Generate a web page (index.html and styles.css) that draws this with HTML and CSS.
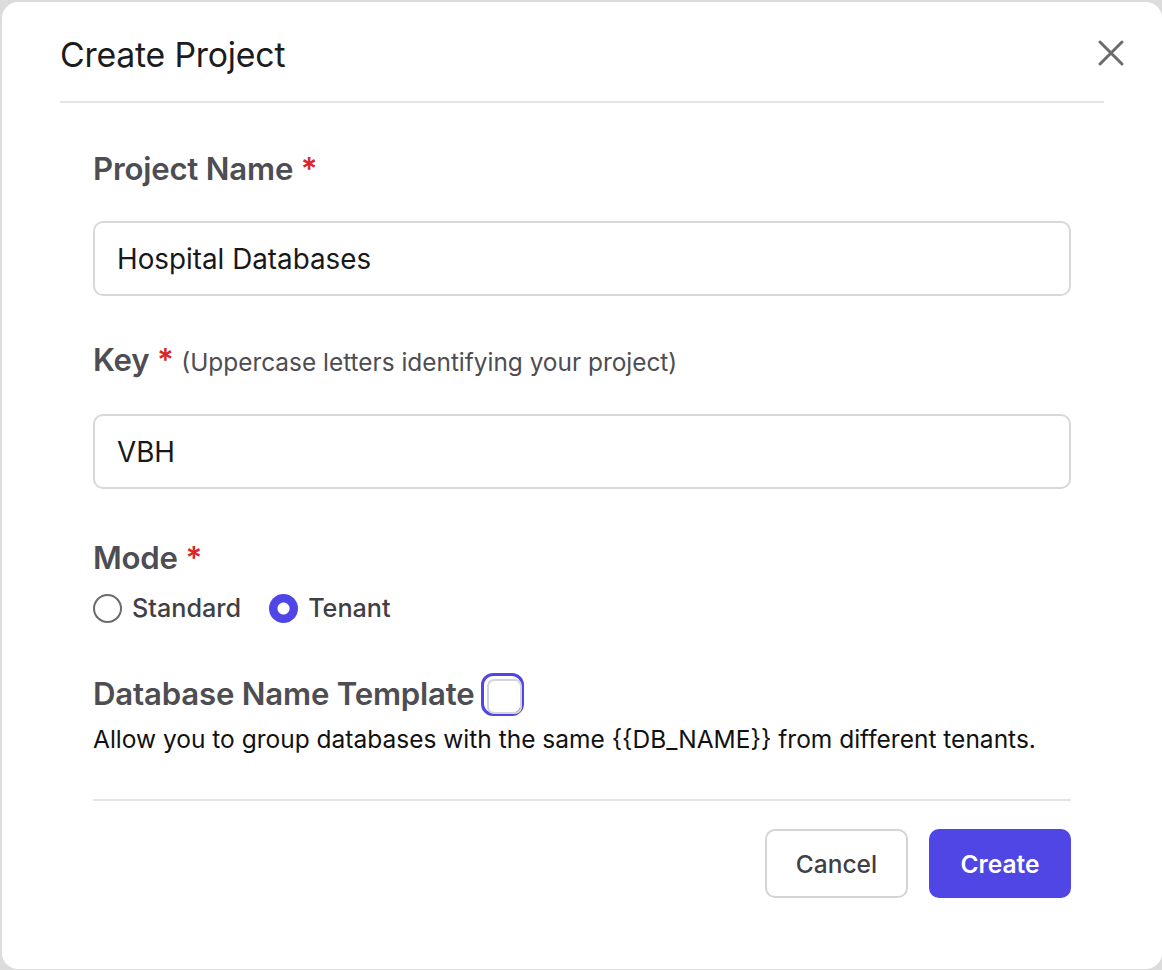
FILE: index.html
```html
<!DOCTYPE html>
<html lang="en">
<head>
<meta charset="utf-8">
<title>Create Project</title>
<link rel="stylesheet" href="styles.css">
</head>
<body>
<div class="dialog">
  <div class="header">
    <h1 class="title">Create Project</h1>
    <button class="close" aria-label="Close">
      <svg width="28" height="28" viewBox="0 0 28 28"><path d="M3 3 L25 25 M25 3 L3 25" stroke="#6b6b6b" stroke-width="3" stroke-linecap="round"/></svg>
    </button>
  </div>
  <div class="body">
    <div class="field">
      <div class="label">Project Name <span class="req">*</span></div>
      <div class="input">Hospital Databases</div>
    </div>
    <div class="field">
      <div class="label">Key <span class="req">*</span> <span class="hint">(Uppercase letters identifying your project)</span></div>
      <div class="input">VBH</div>
    </div>
    <div class="field mode">
      <div class="label">Mode <span class="req">*</span></div>
      <div class="radios">
        <label class="radio"><span class="dot"></span>Standard</label>
        <label class="radio"><span class="dot on"></span>Tenant</label>
      </div>
    </div>
    <div class="field template">
      <div class="label tpl">Database Name Template<span class="check"></span></div>
      <div class="desc">Allow you to group databases with the same {{DB_NAME}} from different tenants.</div>
    </div>
    <div class="footer">
      <button class="btn cancel">Cancel</button>
      <button class="btn create">Create</button>
    </div>
  </div>
</div>
</body>
</html>
```
FILE: styles.css
```css
* { box-sizing: border-box; }
html, body { margin: 0; padding: 0; }
body {
  background: #dcdcdc;
  font-family: Inter, "Noto Sans", sans-serif;
  padding: 2px 0 0 2px;
  height: 970px;
  overflow: hidden;
}
.dialog {
  background: #fff;
  border-radius: 16px;
  width: 1160px;
  height: 967px;
}
.header {
  display: flex;
  align-items: flex-start;
  justify-content: space-between;
  margin: 0 58px 0 58px;
  padding-top: 33px;
  height: 101px;
  border-bottom: 2px solid #e4e4e7;
}
.title {
  margin: 0;
  font-size: 33.8px;
  font-weight: 400;
  color: #1c1c1e;
  line-height: 40px;
  letter-spacing: -0.2px;
}
.close {
  background: none;
  border: 0;
  padding: 0;
  margin: 4px -21px 0 0;
  width: 28px;
  height: 28px;
}
.body {
  padding: 0 91px 0 91px;
}
.label {
  font-size: 31.2px;
  font-weight: 600;
  color: #4d4d52;
  line-height: 36px;
  margin-top: 48px;
  letter-spacing: -0.2px;
}
.req { color: #dc2626; font-weight: 600; }
.hint {
  font-size: 24.4px;
  font-weight: 400;
  color: #4d4d52;
  letter-spacing: 0;
}
.input {
  margin-top: 34px;
  height: 75px;
  border: 2px solid #d8d8dc;
  border-radius: 10px;
  padding: 0 22px;
  display: flex;
  align-items: center;
  font-size: 27.8px;
  color: #18181b;
}
.field:nth-child(2) .label { margin-top: 46px; }
.field.mode .label { margin-top: 51px; }
.radios {
  display: flex;
  gap: 28px;
  margin-top: 15px;
  height: 34px;
  align-items: center;
}
.radio {
  display: flex;
  align-items: center;
  gap: 10px;
  font-size: 25.2px;
  font-weight: 500;
  color: #3f3f46;
}
.dot {
  width: 29px;
  height: 29px;
  border-radius: 50%;
  border: 2px solid #6b6b6b;
  background: #fff;
}
.dot.on {
  border: 0;
  background: radial-gradient(circle, #fff 0 5.5px, #4f46e5 6.5px);
}
.field.template .label { margin-top: 47px; }
.label.tpl {
  display: flex;
  align-items: center;
  height: 44px;
}
.check {
  width: 43px;
  height: 43px;
  margin-left: 6px;
  border: 3px solid #4f46e5;
  border-radius: 12px;
  padding: 3px;
}
.check::after {
  content: "";
  display: block;
  width: 100%;
  height: 100%;
  border: 2px solid #d4d4d8;
  border-radius: 7px;
}
.desc {
  margin-top: 7px;
  font-size: 24.5px;
  color: #111;
  line-height: 32px;
}
.footer {
  margin-top: 44px;
  border-top: 2px solid #e4e4e7;
  padding-top: 28px;
  display: flex;
  justify-content: flex-end;
  gap: 21px;
}
.btn {
  height: 69px;
  border-radius: 10px;
  font-family: Inter, "Noto Sans", sans-serif;
  font-size: 24.5px;
  padding: 0;
}
.cancel {
  width: 143px;
  background: #fff;
  border: 2px solid #d4d4d8;
  color: #3f3f46;
  font-weight: 500;
}
.create {
  width: 142px;
  background: #4f46e5;
  border: 0;
  color: #fff;
  font-weight: 600;
}
```
